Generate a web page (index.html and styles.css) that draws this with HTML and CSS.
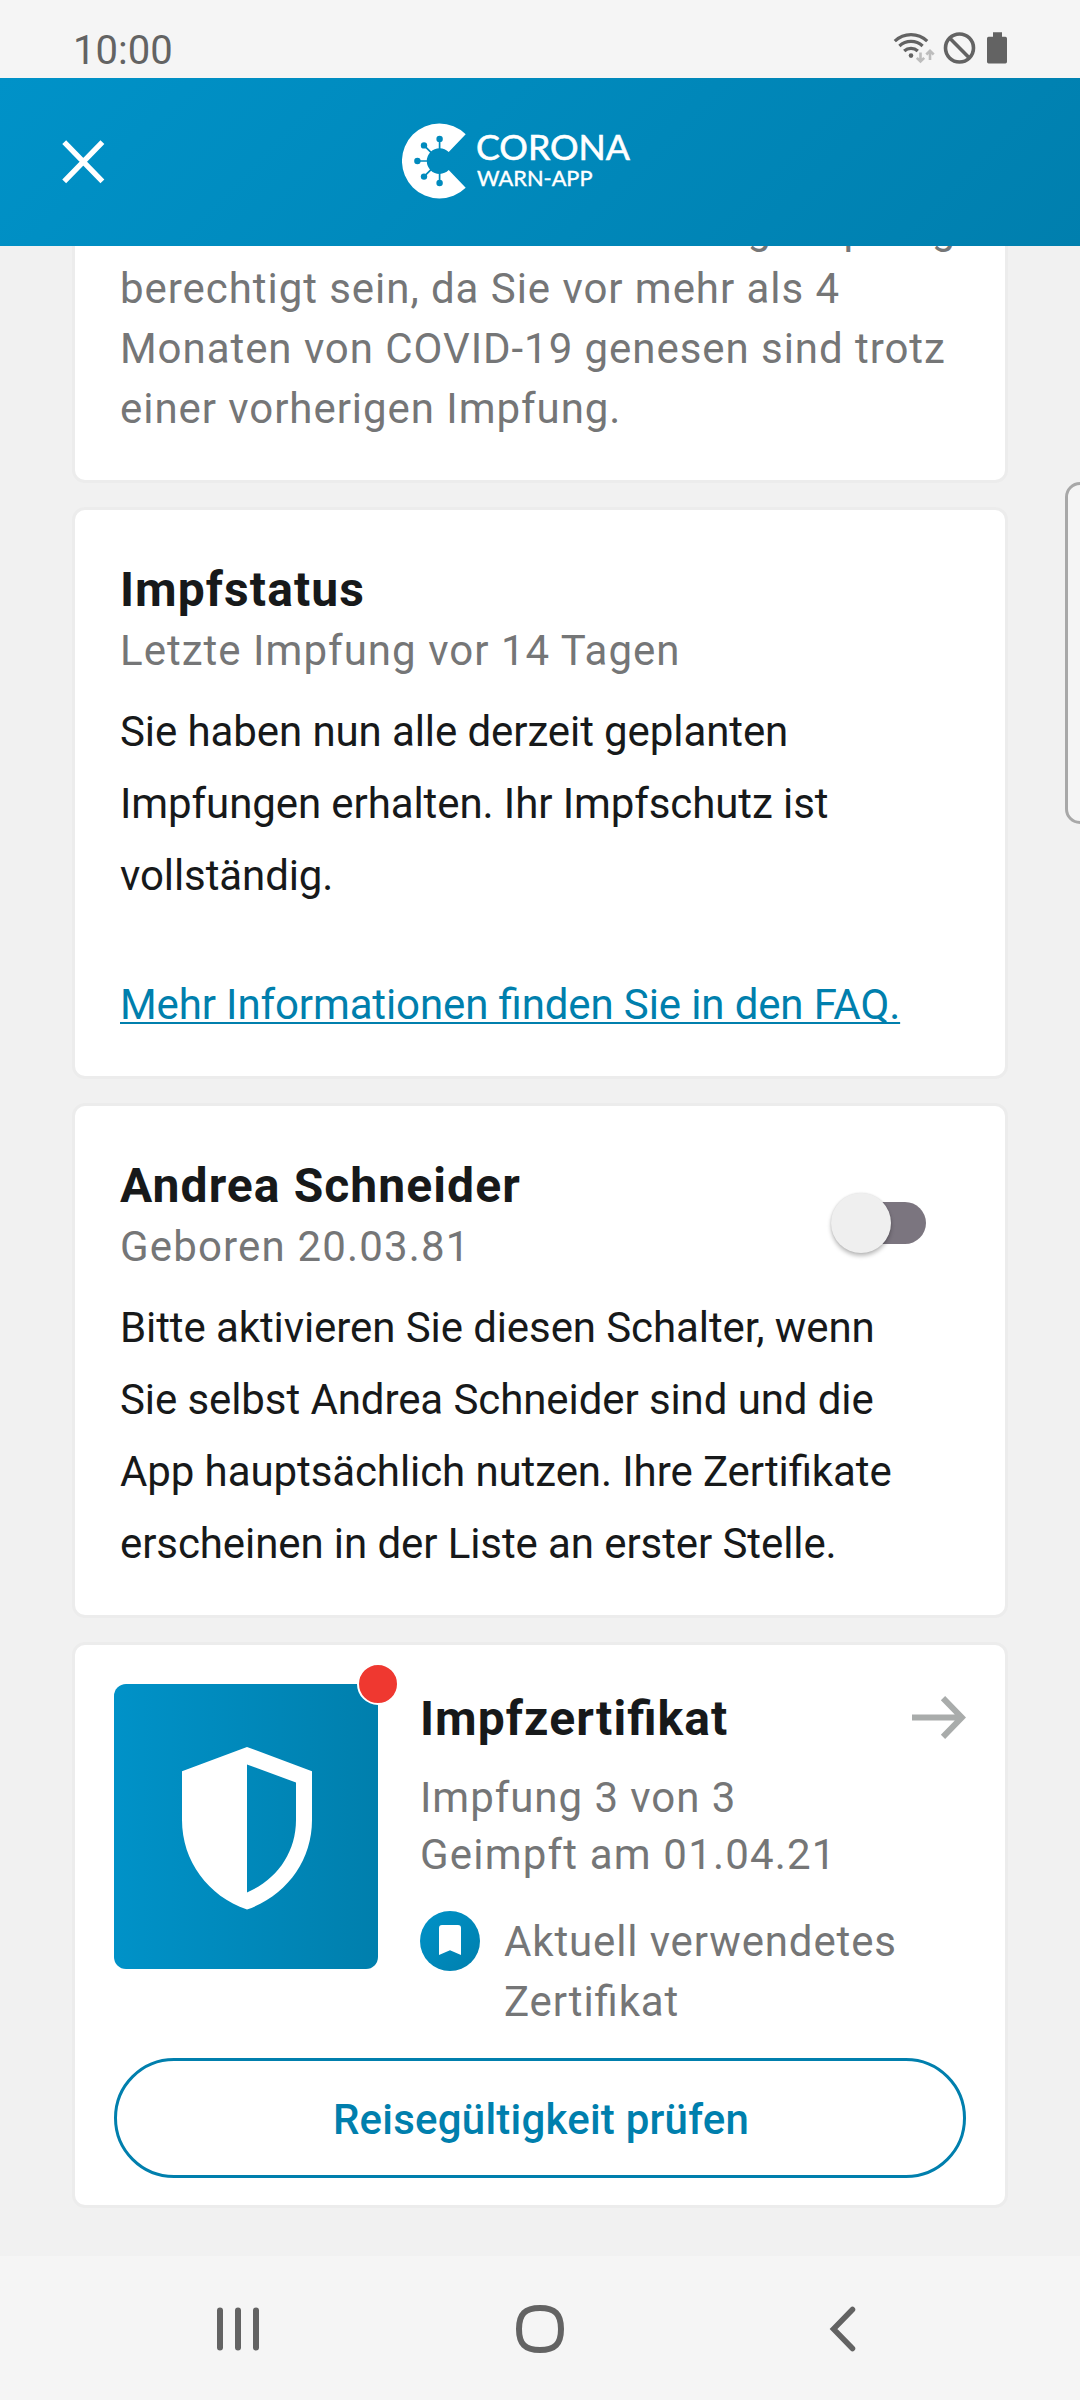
FILE: index.html
```html
<!DOCTYPE html>
<html lang="de">
<head>
<meta charset="utf-8">
<title>Corona-Warn-App</title>
<link rel="stylesheet" href="styles.css">
</head>
<body>
<div class="screen">
  <div class="statusbar">
    <span class="clock">10:00</span>
    <svg class="status-icons" width="120" height="40" viewBox="890 28 120 40">
      <g fill="none" stroke="#636363" stroke-width="3.2" stroke-linecap="butt">
        <path d="M894.8 41.2a23.5 23.5 0 0 1 32.4 0"/>
        <path d="M899.4 46a17 17 0 0 1 23.2 0"/>
        <path d="M904.2 51a10 10 0 0 1 13.6 0"/>
        <circle cx="959.5" cy="48" r="14" stroke-width="3.6"/>
        <path d="M949.6 38.1l19.8 19.8" stroke-width="3.6"/>
      </g>
      <circle cx="911" cy="55.6" r="2.3" fill="#636363"/>
      <g fill="none" stroke="#bdbdbd" stroke-width="2.6">
        <path d="M920.5 52.5v9M916.8 57.8l3.7 3.7 3.7-3.7M930 60v-9M926.3 54.5l3.7-3.7 3.7 3.7"/>
      </g>
      <path d="M993 32.3h9v4.5h3.4q1.6 0 1.6 1.6v23.4q0 1.6-1.6 1.6h-16.8q-1.6 0-1.6-1.6v-23.4q0-1.6 1.6-1.6h4.4z" fill="#636363"/>
    </svg>
  </div>

  <header class="appbar">
    <svg class="close" width="44" height="44" viewBox="0 0 44 44">
      <path d="M3.2 2.2L41.4 41.4M41.4 2.2L3.2 41.4" stroke="#fff" stroke-width="5.4" fill="none"/>
    </svg>
    <svg class="logo" width="230" height="76" viewBox="402 122.5 230 76">
      <path d="M465.7 133.7A37.5 37.5 0 1 0 465.7 187.3L448.7 169.6A12.8 12.8 0 1 1 448.7 151.6Z" fill="#fff"/>
      <g stroke="#008abd" stroke-width="1.7" fill="none">
        <path d="M439.6 138.3V149M424 144.9L431.5 152.4M417.4 160.5H428M424 176.2L431.5 168.6M439.6 182.6V172"/>
      </g>
      <g fill="#008abd">
        <circle cx="439.6" cy="138.4" r="3.2"/><circle cx="424" cy="144.9" r="3.2"/><circle cx="417.4" cy="160.5" r="3.2"/><circle cx="424" cy="176.1" r="3.2"/><circle cx="439.6" cy="182.5" r="3.2"/>
      </g>
      <text class="logo-main" x="476" y="159" textLength="154" lengthAdjust="spacingAndGlyphs">CORONA</text>
      <text class="logo-sub" x="477" y="185" textLength="115.5" lengthAdjust="spacingAndGlyphs">WARN-APP</text>
    </svg>
  </header>

  <main class="content">
    <section class="card card-booster">
      <p class="secondary multi">Sie könnten für eine Auffrischungsimpfung berechtigt sein, da Sie vor mehr als 4 Monaten von COVID-19 genesen sind trotz einer vorherigen Impfung.</p>
    </section>

    <section class="card card-status">
      <h2 class="title">Impfstatus</h2>
      <p class="secondary subtitle">Letzte Impfung vor 14 Tagen</p>
      <p class="body">Sie haben nun alle derzeit geplanten Impfungen erhalten. Ihr Impfschutz ist vollständig.</p>
      <a class="faq" href="#">Mehr Informationen finden Sie in den FAQ.</a>
    </section>

    <section class="card card-person">
      <div class="person-head">
        <div>
          <h2 class="title">Andrea Schneider</h2>
          <p class="secondary subtitle born">Geboren 20.03.81</p>
        </div>
        <div class="switch" role="switch" aria-checked="false"><span class="thumb"></span></div>
      </div>
      <p class="body">Bitte aktivieren Sie diesen Schalter, wenn Sie selbst Andrea Schneider sind und die App hauptsächlich nutzen. Ihre Zertifikate erscheinen in der Liste an erster Stelle.</p>
    </section>

    <section class="card card-cert">
      <div class="cert">
        <div class="tile">
          <svg width="130" height="163" viewBox="0 0 130 163">
            <path fill="#fff" fill-rule="evenodd" d="M65 0L130 24.3V73C130 114 104 149 65 162.6C26 149 0 114 0 73V24.3ZM65 17.5V145.4C94.500 133 114 106 114 73V35.500Z"/>
          </svg>
          <span class="dot"></span>
        </div>
        <div class="cert-text">
          <div class="cert-head">
            <h2 class="title">Impfzertifikat</h2>
            <svg width="54" height="43" viewBox="0 0 54 43">
              <path d="M0 21.500H49M31 2.200L49.800 21.500L31 40.800" fill="none" stroke="#a9acab" stroke-width="6"/>
            </svg>
          </div>
          <div class="cert-info">
            <p class="secondary">Impfung 3 von 3</p>
            <p class="secondary cert-date">Geimpft am 01.04.21</p>
          </div>
          <div class="current">
            <span class="bookmark">
              <svg width="22" height="30" viewBox="0 0 22 30"><path fill="#fff" d="M0 30V3Q0 0 3 0H19Q22 0 22 3V30L11 25.300Z"/></svg>
            </span>
            <p class="secondary multi">Aktuell verwendetes Zertifikat</p>
          </div>
        </div>
      </div>
      <button class="check">Reisegültigkeit prüfen</button>
    </section>
  </main>

  <nav class="navbar">
    <svg width="48" height="48" viewBox="0 0 48 48"><path d="M6 5.500V42.500M24 5.500V42.500M42 5.500V42.500" stroke="#636363" stroke-width="6" stroke-linecap="round"/></svg>
    <svg width="48" height="48" viewBox="0 0 48 48"><path d="M24 3C39 3 45 9 45 24S39 45 24 45S3 39 3 24S9 3 24 3Z" fill="none" stroke="#636363" stroke-width="6"/></svg>
    <svg width="48" height="48" viewBox="0 0 48 48"><path d="M34.500 4.500L15.500 24L34.500 43.500" fill="none" stroke="#636363" stroke-width="5.500" stroke-linecap="round"/></svg>
  </nav>
  <div class="edge-handle"></div>
</div>
</body>
</html>
```
FILE: styles.css
```css
* { box-sizing: border-box; }

body {
  margin: 0;
  font-family: Roboto, sans-serif;
  font-feature-settings: "liga" 1;
  background: #f1f1f1;
}

h2, p { margin: 0; }
svg { display: block; flex: none; }

.screen {
  position: relative;
  width: 1080px;
  height: 2400px;
  overflow: hidden;
  display: flex;
  flex-direction: column;
}

.statusbar {
  height: 78px;
  padding: 18px 70px 0 73px;
  display: flex;
  justify-content: space-between;
  background: #f5f5f5;
}
.clock {
  font-size: 40px;
  line-height: 66px;
  color: #636363;
}
.status-icons { margin-top: 10px; }

.appbar {
  height: 168px;
  padding: 45px 60px 0;
  display: flex;
  background: linear-gradient(135deg, #0092c8, #007fae);
}
.close { margin: 17px 0 0 1px; }
.logo { margin-left: 297px; }
.logo-main, .logo-sub { font-family: Lato, sans-serif; fill: #fff; }
.logo-main { font-size: 34.500px; stroke: #fff; stroke-width: .6px; }
.logo-sub { font-size: 21.500px; stroke: #fff; stroke-width: .4px; }

.content {
  flex: 1;
  overflow: hidden;
  padding: 0 72px;
}

.card {
  margin-bottom: 24px;
  border: 3px solid #ececec;
  border-radius: 13px;
  background: #fff;
}

.title {
  font-size: 48px;
  line-height: 57px;
  font-weight: 700;
  letter-spacing: 1.08px;
  color: #17191a;
}
.secondary {
  font-size: 42px;
  letter-spacing: .95px;
  color: #757677;
}
.multi { line-height: 60px; }
.subtitle {
  margin-top: 3px;
  line-height: 59px;
  letter-spacing: 1.03px;
}
.born { letter-spacing: 1.16px; }
.body {
  width: 805px;
  margin-top: 16px;
  font-size: 42px;
  line-height: 72px;
  letter-spacing: -.09px;
  color: #17191a;
}

.card-booster {
  margin-top: -88px;
  padding: 38px 42px 41px 45px;
}

.card-status { padding: 51px 45px 47px; }
.faq {
  display: block;
  margin-top: 68px;
  font-size: 42px;
  line-height: 49px;
  letter-spacing: -.12px;
  color: #007fad;
  text-decoration-thickness: 2px;
  text-underline-offset: 3px;
  text-decoration-skip-ink: none;
}

.card-person { padding: 51px 45px 35px; }
.person-head {
  display: flex;
  justify-content: space-between;
  padding-right: 34px;
}
.switch {
  width: 85px;
  height: 42px;
  margin-top: 45px;
  border-radius: 21px;
  background: #7b757f;
}
.thumb {
  display: block;
  width: 60px;
  height: 60px;
  margin: -9px 0 0 -10px;
  border-radius: 50%;
  background: #efefef;
  box-shadow: 0 3px 4px rgba(0, 0, 0, .26), 0 0 2px rgba(0, 0, 0, .12);
}

.card-cert { padding: 39px 39px 27px; }
.cert { display: flex; gap: 42px; }
.tile {
  position: relative;
  flex: none;
  width: 264px;
  height: 285px;
  padding: 63px 0 0 68px;
  border-radius: 12px;
  background: linear-gradient(90deg, #0092c8, #007fad);
}
.dot {
  position: absolute;
  top: -21px;
  right: -21px;
  width: 42px;
  height: 42px;
  border: 2px solid #fff;
  border-radius: 50%;
  background: #ef3830;
}
.cert-text { flex: 1; padding-top: 6px; }
.cert-head {
  display: flex;
  justify-content: space-between;
}
.cert-head svg { margin-top: 6px; }
.cert-info {
  margin-top: 22px;
  line-height: 57px;
}
.cert-date { letter-spacing: 1.18px; }
.current {
  margin-top: 28px;
  display: flex;
  gap: 24px;
}
.current .secondary {
  padding-top: 1px;
  margin-bottom: -1px;
  letter-spacing: .87px;
}
.bookmark {
  flex: none;
  width: 60px;
  height: 60px;
  padding: 14px 0 0 19px;
  border-radius: 50%;
  background: linear-gradient(135deg, #0092c8, #007fad);
}
.check {
  display: block;
  width: 852px;
  height: 120px;
  margin-top: 27px;
  padding: 4px 0 0 2px;
  border: 3px solid #007fad;
  border-radius: 60px;
  background: #fff;
  font: 500 42px/60px Roboto, sans-serif;
  letter-spacing: .22px;
  color: #007fad;
}

.navbar {
  height: 144px;
  padding: 1px 214px 0;
  display: flex;
  justify-content: space-between;
  align-items: center;
  background: #f5f5f5;
}

/* Edge panel grip, floats over the content at the right screen edge */
.edge-handle {
  position: absolute;
  top: 482px;
  right: -15px;
  width: 30px;
  height: 342px;
  border: 3px solid #a8a8a8;
  border-radius: 15px;
  background: #f5f5f5;
}
```
